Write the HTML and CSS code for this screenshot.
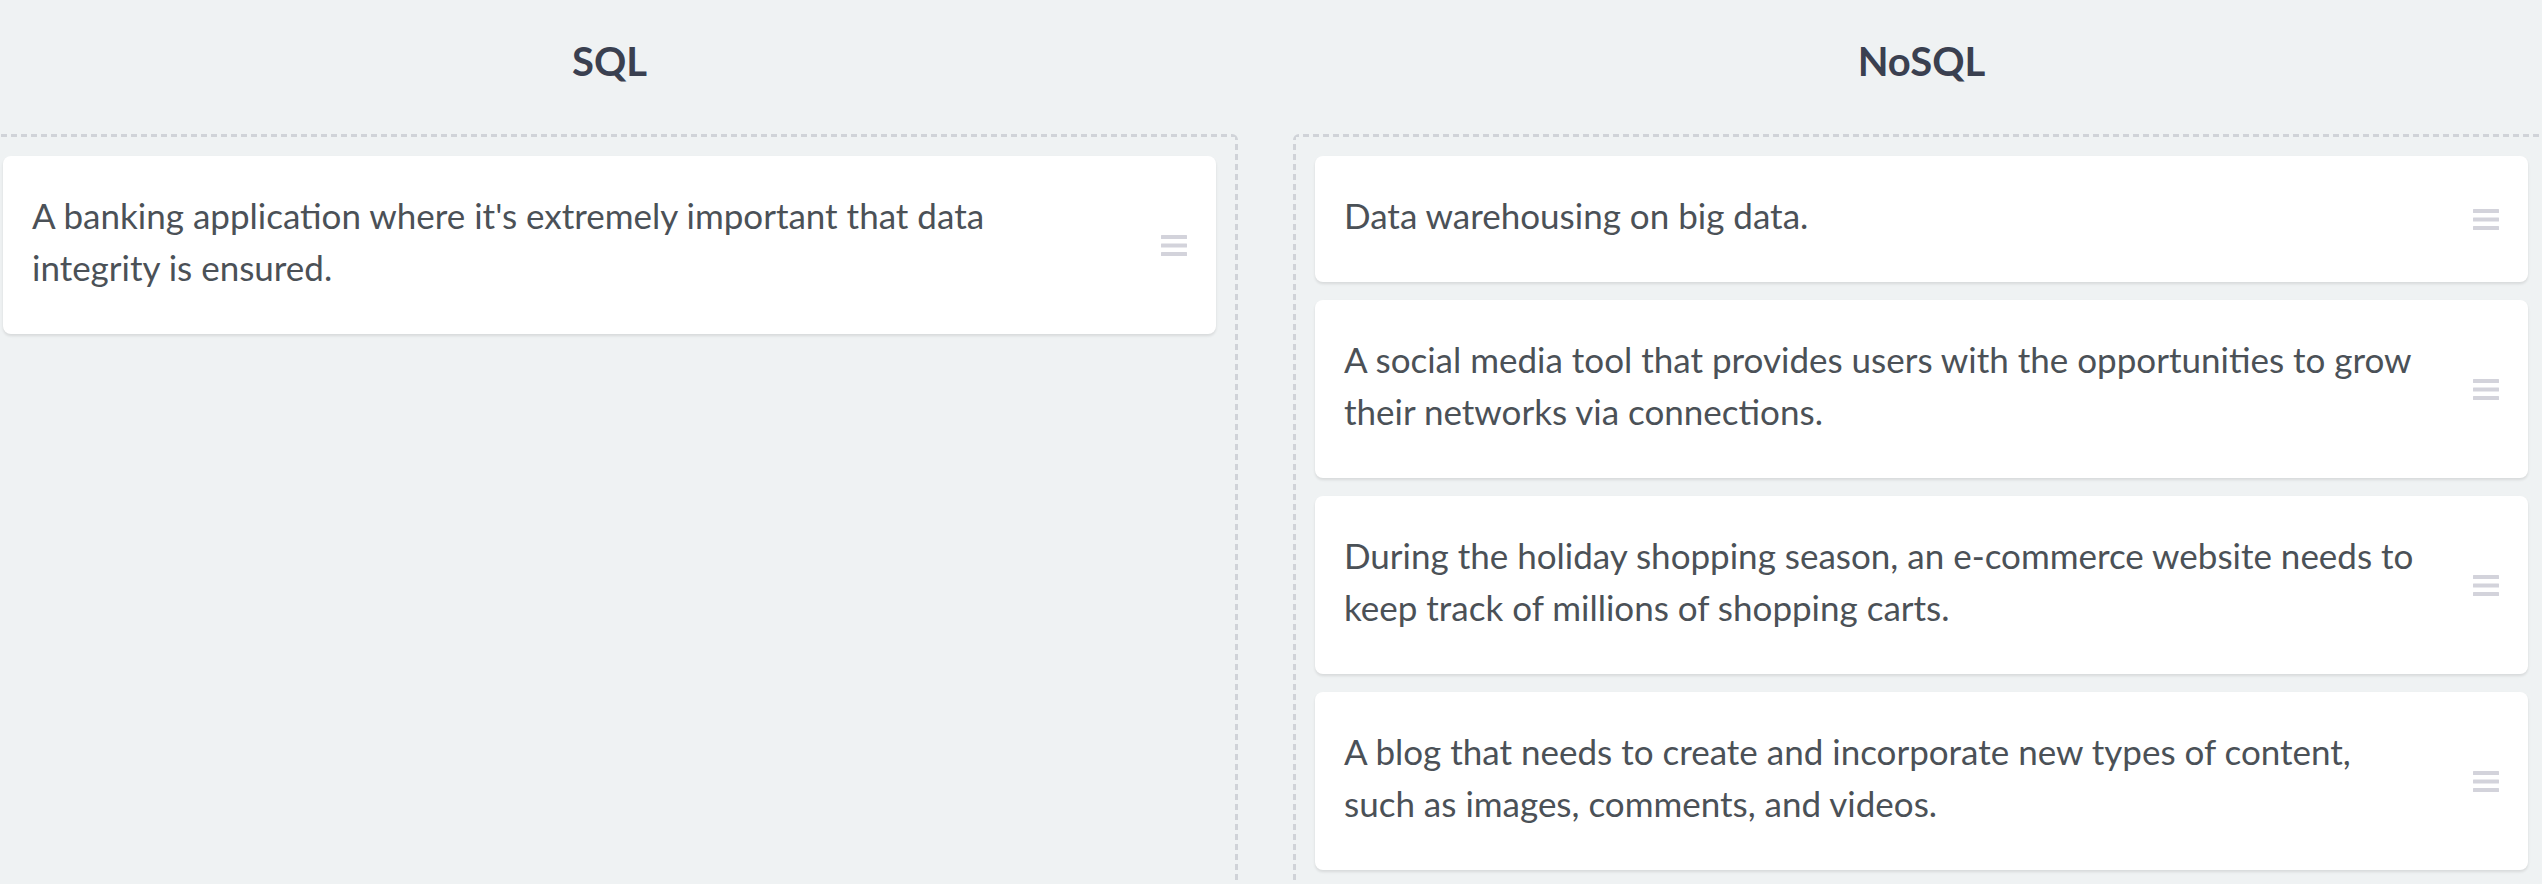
FILE: index.html
```html
<!DOCTYPE html>
<html lang="en">
<head>
<meta charset="utf-8">
<title>SQL vs NoSQL</title>
<link rel="stylesheet" href="styles.css">
</head>
<body>
<div class="board">
  <section class="column">
    <h2 class="column-title">SQL</h2>
    <div class="dropzone">
      <div class="card">
        <p class="card-text">A banking application where it's extremely important that data integrity is ensured.</p>
        <svg class="handle" width="26" height="21" viewBox="0 0 26 21"><rect x="0" y="0" width="26" height="4" rx="0.5"/><rect x="0" y="8.5" width="26" height="4" rx="0.5"/><rect x="0" y="17" width="26" height="4" rx="0.5"/></svg>
      </div>
    </div>
  </section>
  <section class="column">
    <h2 class="column-title">NoSQL</h2>
    <div class="dropzone">
      <div class="card">
        <p class="card-text">Data warehousing on big data.</p>
        <svg class="handle" width="26" height="21" viewBox="0 0 26 21"><rect x="0" y="0" width="26" height="4" rx="0.5"/><rect x="0" y="8.5" width="26" height="4" rx="0.5"/><rect x="0" y="17" width="26" height="4" rx="0.5"/></svg>
      </div>
      <div class="card">
        <p class="card-text">A social media tool that provides users with the opportunities to grow their networks via connections.</p>
        <svg class="handle" width="26" height="21" viewBox="0 0 26 21"><rect x="0" y="0" width="26" height="4" rx="0.5"/><rect x="0" y="8.5" width="26" height="4" rx="0.5"/><rect x="0" y="17" width="26" height="4" rx="0.5"/></svg>
      </div>
      <div class="card">
        <p class="card-text">During the holiday shopping season, an e-commerce website needs to keep track of millions of shopping carts.</p>
        <svg class="handle" width="26" height="21" viewBox="0 0 26 21"><rect x="0" y="0" width="26" height="4" rx="0.5"/><rect x="0" y="8.5" width="26" height="4" rx="0.5"/><rect x="0" y="17" width="26" height="4" rx="0.5"/></svg>
      </div>
      <div class="card">
        <p class="card-text">A blog that needs to create and incorporate new types of content, such as images, comments, and videos.</p>
        <svg class="handle" width="26" height="21" viewBox="0 0 26 21"><rect x="0" y="0" width="26" height="4" rx="0.5"/><rect x="0" y="8.5" width="26" height="4" rx="0.5"/><rect x="0" y="17" width="26" height="4" rx="0.5"/></svg>
      </div>
    </div>
  </section>
</div>
</body>
</html>
```

FILE: styles.css
```css
html, body {
  margin: 0;
  padding: 0;
  background: #eff2f3;
  overflow: hidden;
}

body {
  font-family: Lato, "Liberation Sans", sans-serif;
  color: #4b5157;
}

.board {
  display: flex;
  gap: 55px;
  width: 2569px;
  margin-left: -19px;
}

.column {
  flex: 1 1 0;
  min-width: 0;
  display: flex;
  flex-direction: column;
}

.column-title {
  margin: 0;
  padding: 33px 0 45px;
  text-align: center;
  font-size: 40px;
  line-height: 56px;
  font-weight: 700;
  color: #3a4050;
}

.dropzone {
  --dash: #d0d3d8;
  padding: 22px 22px;
  min-height: 900px;
  border-radius: 6px;
  background:
    repeating-linear-gradient(to right, var(--dash) 0 6px, transparent 6px 10px) top left / 100% 3px no-repeat,
    repeating-linear-gradient(to bottom, var(--dash) 0 6px, transparent 6px 10px) top left / 3px 100% no-repeat,
    repeating-linear-gradient(to bottom, var(--dash) 0 6px, transparent 6px 10px) top right / 3px 100% no-repeat;
  display: flex;
  flex-direction: column;
  gap: 18px;
}

.card {
  background: #ffffff;
  border-radius: 8px;
  box-shadow: 0 2px 3px rgba(0, 0, 0, 0.1);
  padding: 33px 29px 33px 29px;
  display: flex;
  align-items: center;
  gap: 48px;
}

.card-text {
  flex: 1 1 auto;
  margin: 0 0 8px;
  font-size: 35px;
  line-height: 52px;
  color: #4b5157;
}

.handle {
  flex: none;
  fill: #d3d3db;
}
```
